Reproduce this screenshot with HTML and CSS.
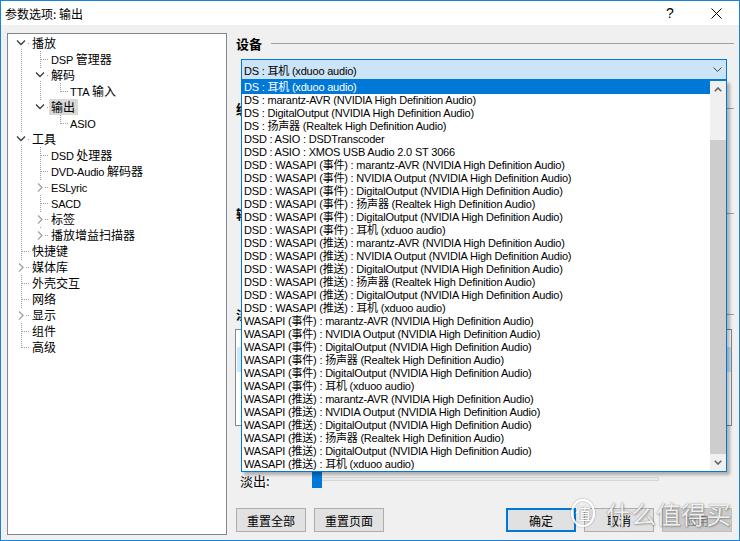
FILE: index.html
```html
<!DOCTYPE html>
<html lang="zh-CN">
<head>
<meta charset="utf-8">
<title>参数选项: 输出</title>
<link rel="stylesheet" href="styles.css">
</head>
<body>
<div class="window">
  <div class="titlebar">
    <span class="title">参数选项: 输出</span>
    <span class="caption-btn help">?</span>
    <span class="caption-btn close">
      <svg width="11" height="11" viewBox="0 0 11 11"><path d="M0.5 0.5L10.5 10.5M10.5 0.5L0.5 10.5" stroke="#000" stroke-width="1" fill="none"/></svg>
    </span>
  </div>
  <div class="content">
    <div class="tree">
      <svg class="tree-lines" width="218" height="500" viewBox="0 0 218 500">
        <g stroke="#a0a0a0" stroke-width="1" stroke-dasharray="1 1" fill="none">
          <path d="M13.5 9V314"/>
          <path d="M14 9.5H22M14 105.5H22M14 217.5H22M14 233.5H22M14 249.5H22M14 265.5H22M14 281.5H22M14 297.5H22M14 313.5H22"/>
          <path d="M32.5 17V74M32.5 113V202"/>
          <path d="M33 25.5H41M33 41.5H41M33 73.5H41M33 121.5H41M33 137.5H41M33 153.5H41M33 169.5H41M33 185.5H41M33 201.5H41"/>
          <path d="M52.5 49V58M52.5 81V90"/>
          <path d="M53 57.5H60M53 89.5H60"/>
        </g>
        <g fill="#fff">
          <rect x="6" y="3" width="14" height="11"/>
          <rect x="6" y="99" width="14" height="11"/>
          <rect x="25" y="35" width="14" height="11"/>
          <rect x="25" y="67" width="14" height="11"/>
          <rect x="8" y="227" width="10" height="13"/>
          <rect x="8" y="275" width="10" height="13"/>
          <rect x="27" y="147" width="10" height="13"/>
          <rect x="27" y="179" width="10" height="13"/>
          <rect x="27" y="195" width="10" height="13"/>
        </g>
        <g stroke="#404040" stroke-width="1.4" fill="none">
          <polyline points="9,6.5 13,10.5 17,6.5"/>
          <polyline points="9,102.5 13,106.5 17,102.5"/>
          <polyline points="28,38.5 32,42.5 36,38.5"/>
          <polyline points="28,70.5 32,74.5 36,70.5"/>
        </g>
        <g stroke="#a6a6a6" stroke-width="1.4" fill="none">
          <polyline points="11,229.5 15,233.5 11,237.5"/>
          <polyline points="11,277.5 15,281.5 11,285.5"/>
          <polyline points="30,149.5 34,153.5 30,157.5"/>
          <polyline points="30,181.5 34,185.5 30,189.5"/>
          <polyline points="30,197.5 34,201.5 30,205.5"/>
        </g>
      </svg>
      <div class="node l0"><span class="label">播放</span></div>
      <div class="node l1"><span class="label"><span class="en">DSP</span> 管理器</span></div>
      <div class="node l1"><span class="label">解码</span></div>
      <div class="node l2"><span class="label"><span class="en">TTA</span> 输入</span></div>
      <div class="node l1"><span class="label selected">输出</span></div>
      <div class="node l2"><span class="label"><span class="en">ASIO</span></span></div>
      <div class="node l0"><span class="label">工具</span></div>
      <div class="node l1"><span class="label"><span class="en">DSD</span> 处理器</span></div>
      <div class="node l1"><span class="label"><span class="en">DVD-Audio</span> 解码器</span></div>
      <div class="node l1"><span class="label"><span class="en">ESLyric</span></span></div>
      <div class="node l1"><span class="label"><span class="en">SACD</span></span></div>
      <div class="node l1"><span class="label">标签</span></div>
      <div class="node l1"><span class="label">播放增益扫描器</span></div>
      <div class="node l0"><span class="label">快捷键</span></div>
      <div class="node l0"><span class="label">媒体库</span></div>
      <div class="node l0"><span class="label">外壳交互</span></div>
      <div class="node l0"><span class="label">网络</span></div>
      <div class="node l0"><span class="label">显示</span></div>
      <div class="node l0"><span class="label">组件</span></div>
      <div class="node l0"><span class="label">高级</span></div>
    </div>

    <div class="page">
      <div class="heading">设备</div>
      <div class="combo-wrap">
        <div class="combo">
          <span class="combo-text">DS : 耳机 (xduoo audio)</span>
          <svg class="combo-arrow" width="9" height="5" viewBox="0 0 9 5"><polyline points="0.5,0.5 4.5,4.5 8.5,0.5" stroke="#444" stroke-width="1" fill="none"/></svg>
        </div>
        <div class="popup">
          <div class="items">
            <div class="item sel">DS : 耳机 (xduoo audio)</div>
            <div class="item">DS : marantz-AVR (NVIDIA High Definition Audio)</div>
            <div class="item">DS : DigitalOutput (NVIDIA High Definition Audio)</div>
            <div class="item">DS : 扬声器 (Realtek High Definition Audio)</div>
            <div class="item">DSD : ASIO : DSDTranscoder</div>
            <div class="item">DSD : ASIO : XMOS USB Audio 2.0 ST 3066</div>
            <div class="item">DSD : WASAPI (事件) : marantz-AVR (NVIDIA High Definition Audio)</div>
            <div class="item">DSD : WASAPI (事件) : NVIDIA Output (NVIDIA High Definition Audio)</div>
            <div class="item">DSD : WASAPI (事件) : DigitalOutput (NVIDIA High Definition Audio)</div>
            <div class="item">DSD : WASAPI (事件) : 扬声器 (Realtek High Definition Audio)</div>
            <div class="item">DSD : WASAPI (事件) : DigitalOutput (NVIDIA High Definition Audio)</div>
            <div class="item">DSD : WASAPI (事件) : 耳机 (xduoo audio)</div>
            <div class="item">DSD : WASAPI (推送) : marantz-AVR (NVIDIA High Definition Audio)</div>
            <div class="item">DSD : WASAPI (推送) : NVIDIA Output (NVIDIA High Definition Audio)</div>
            <div class="item">DSD : WASAPI (推送) : DigitalOutput (NVIDIA High Definition Audio)</div>
            <div class="item">DSD : WASAPI (推送) : 扬声器 (Realtek High Definition Audio)</div>
            <div class="item">DSD : WASAPI (推送) : DigitalOutput (NVIDIA High Definition Audio)</div>
            <div class="item">DSD : WASAPI (推送) : 耳机 (xduoo audio)</div>
            <div class="item">WASAPI (事件) : marantz-AVR (NVIDIA High Definition Audio)</div>
            <div class="item">WASAPI (事件) : NVIDIA Output (NVIDIA High Definition Audio)</div>
            <div class="item">WASAPI (事件) : DigitalOutput (NVIDIA High Definition Audio)</div>
            <div class="item">WASAPI (事件) : 扬声器 (Realtek High Definition Audio)</div>
            <div class="item">WASAPI (事件) : DigitalOutput (NVIDIA High Definition Audio)</div>
            <div class="item">WASAPI (事件) : 耳机 (xduoo audio)</div>
            <div class="item">WASAPI (推送) : marantz-AVR (NVIDIA High Definition Audio)</div>
            <div class="item">WASAPI (推送) : NVIDIA Output (NVIDIA High Definition Audio)</div>
            <div class="item">WASAPI (推送) : DigitalOutput (NVIDIA High Definition Audio)</div>
            <div class="item">WASAPI (推送) : 扬声器 (Realtek High Definition Audio)</div>
            <div class="item">WASAPI (推送) : DigitalOutput (NVIDIA High Definition Audio)</div>
            <div class="item">WASAPI (推送) : 耳机 (xduoo audio)</div>
          </div>
          <div class="scrollbar">
            <div class="sb-btn">
              <svg width="8" height="5" viewBox="0 0 8 5"><polyline points="0.8,4.2 4,1 7.2,4.2" stroke="#606060" stroke-width="1.6" fill="none"/></svg>
            </div>
            <div class="sb-track"><div class="sb-thumb"></div></div>
            <div class="sb-btn">
              <svg width="8" height="5" viewBox="0 0 8 5"><polyline points="0.8,0.8 4,4 7.2,0.8" stroke="#606060" stroke-width="1.6" fill="none"/></svg>
            </div>
          </div>
        </div>
      </div>

      <div class="heading sec-buffer">缓冲长度</div>
      <div class="section-body buffer-body"></div>
      <div class="heading">输出格式</div>
      <div class="section-body format-body"></div>
      <div class="heading">淡入淡出</div>
      <div class="fade-list"><div class="fade-row"></div></div>
      <div class="fade-out">
        <span class="fade-label">淡出:</span>
        <div class="slider">
          <div class="slider-track"></div>
          <div class="slider-thumb"></div>
        </div>
      </div>

      <div class="buttons">
        <button class="btn">重置全部</button>
        <button class="btn">重置页面</button>
        <button class="btn default ok">确定</button>
        <button class="btn">取消</button>
        <button class="btn disabled">应用</button>
      </div>
    </div>
  </div>

  <div class="watermark">
    <span class="wm-badge">值</span>
    <span class="wm-text">什么值得买</span>
  </div>
</div>
</body>
</html>
```

FILE: styles.css
```css
* {
  box-sizing: border-box;
}

html,
body {
  margin: 0;
  padding: 0;
  background: #f0f0f0;
}

body {
  width: 740px;
  height: 541px;
  overflow: hidden;
  font-family: "Liberation Sans", "Noto Sans CJK SC", sans-serif;
  font-size: 11px;
  color: #000;
}

.window {
  position: relative;
  width: 740px;
  height: 541px;
  border: 1px solid #1883d7;
  display: flex;
  flex-direction: column;
  background: #f0f0f0;
}

/* title bar */
.titlebar {
  height: 24px;
  background: #fff;
  display: flex;
  align-items: center;
  padding-left: 4px;
  font-family: "Noto Sans CJK SC", sans-serif;
  font-size: 12px;
}

.title {
  flex: 1;
}

.caption-btn {
  width: 46px;
  height: 24px;
  display: flex;
  align-items: center;
  justify-content: center;
}

.help {
  font-family: "Liberation Sans", sans-serif;
  font-size: 14px;
}

/* main area */
.content {
  flex: 1;
  display: flex;
  gap: 9px;
  padding: 8px 5px 5px 6px;
}

/* tree */
.tree {
  position: relative;
  width: 220px;
  background: #fff;
  border: 1px solid #828790;
  padding-top: 1px;
  font-family: "Noto Sans CJK SC", sans-serif;
  font-size: 12px;
}

.tree-lines {
  position: absolute;
  left: 0;
  top: 0;
  pointer-events: none;
}

.node {
  position: relative;
  height: 16px;
  line-height: 16px;
  white-space: nowrap;
}

.node.l0 {
  padding-left: 22px;
}

.node.l1 {
  padding-left: 41px;
}

.node.l2 {
  padding-left: 60px;
}

.label {
  display: inline-block;
  height: 16px;
  padding: 0 2px;
}

.label.selected {
  background: #d9d9d9;
  padding: 0 3px 0 2px;
}

.en {
  font-family: "Liberation Sans", sans-serif;
  font-size: 11px;
  letter-spacing: -0.2px;
}

/* right page */
.page {
  flex: 1;
  display: flex;
  flex-direction: column;
}

.heading {
  display: flex;
  align-items: center;
  height: 16px;
  margin-top: 2px;
  font-family: "Noto Sans CJK SC", sans-serif;
  font-size: 13px;
  font-weight: bold;
}

.heading::after {
  content: "";
  flex: 1;
  height: 1px;
  margin-left: 9px;
  background: #a0a0a0;
}

.combo-wrap {
  position: relative;
  margin: 8px 7px 0 5px;
}

.combo {
  height: 21px;
  border: 1px solid #0078d7;
  background: #cce4f7;
  display: flex;
  align-items: center;
  padding-left: 2px;
  letter-spacing: -0.2px;
}

.combo-arrow {
  margin-left: auto;
  margin-right: 4px;
}

.popup {
  position: absolute;
  top: 21px;
  left: 0;
  width: 486px;
  height: 392px;
  border: 1px solid #0078d7;
  background: #fff;
  display: flex;
  box-shadow: 3px 3px 3px rgba(0, 0, 0, 0.28);
  z-index: 5;
}

.items {
  flex: 1;
  overflow: hidden;
}

.item {
  height: 13px;
  line-height: 13px;
  padding-left: 2px;
  white-space: nowrap;
  letter-spacing: -0.2px;
}

.item.sel {
  background: #0078d7;
  color: #fff;
}

.scrollbar {
  width: 16px;
  background: #f0f0f0;
  display: flex;
  flex-direction: column;
}

.sb-btn {
  height: 17px;
  display: flex;
  align-items: center;
  justify-content: center;
}

.sb-track {
  flex: 1;
  display: flex;
  padding-top: 42px;
}

.sb-thumb {
  flex: 1;
  background: #cdcdcd;
}

/* hidden page content below the popup */
.sec-buffer {
  margin-top: 20px;
}

.buffer-body {
  height: 87px;
}

.format-body {
  height: 83px;
}

.fade-list {
  height: 97px;
  margin: 7px 2px 0 -1px;
  background: #fff;
  border: 1px solid #828790;
  padding-top: 17px;
}

.fade-row {
  height: 25px;
  margin-left: 1px;
  background: #cce8ff;
}

.fade-out {
  display: flex;
  align-items: center;
  height: 16px;
  margin-top: 46px;
  padding-left: 4px;
  font-family: "Noto Sans CJK SC", sans-serif;
  font-size: 13px;
}

.fade-label {
  width: 72px;
}

.slider {
  position: relative;
  width: 347px;
  height: 16px;
}

.slider-track {
  position: absolute;
  left: 1px;
  right: 0;
  top: 5px;
  height: 4px;
  border: 1px solid #d6d6d6;
  background: #e7eaea;
}

.slider-thumb {
  position: absolute;
  left: 0;
  top: -2px;
  width: 10px;
  height: 18px;
  background: #0078d7;
}

/* bottom buttons */
.buttons {
  margin-top: auto;
  margin-bottom: 3px;
  margin-right: 2px;
  display: flex;
  gap: 8px;
}

.btn {
  width: 70px;
  height: 24px;
  padding: 0;
  border: 1px solid #adadad;
  background: #e1e1e1;
  font-family: "Noto Sans CJK SC", sans-serif;
  font-size: 12px;
  color: #000;
}

.btn.ok {
  margin-left: auto;
}

.btn.default {
  border-color: #0078d7;
  box-shadow: inset 0 0 0 1px #0078d7;
}

.btn.disabled {
  background: #cccccc;
  border-color: #bfbfbf;
  color: #838383;
}

/* watermark overlay */
.watermark {
  position: absolute;
  left: 570px;
  top: 497px;
  display: flex;
  align-items: center;
  gap: 11px;
  pointer-events: none;
  font-family: "Noto Sans CJK SC", sans-serif;
}

.wm-badge {
  width: 24px;
  height: 28px;
  border: 2px solid rgba(255, 255, 255, 0.95);
  border-radius: 50%;
  display: flex;
  align-items: center;
  justify-content: center;
  font-size: 16px;
  color: #fff;
  text-shadow: 0 0 2px rgba(0, 0, 0, 0.45);
  box-shadow: 0 0 2px rgba(0, 0, 0, 0.35), inset 0 0 2px rgba(0, 0, 0, 0.35);
}

.wm-text {
  font-size: 25px;
  line-height: 30px;
  color: rgba(255, 255, 255, 0.92);
  text-shadow: 0 0 1px rgba(0, 0, 0, 0.55), 1px 1px 2px rgba(0, 0, 0, 0.25);
}
```
